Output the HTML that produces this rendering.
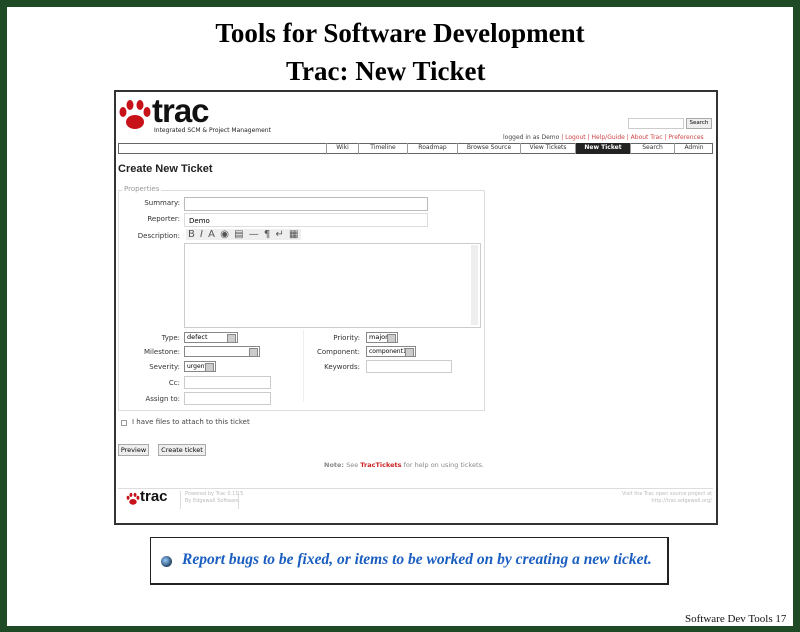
<!DOCTYPE html>
<html><head><meta charset="utf-8"><style>
*{margin:0;padding:0;box-sizing:border-box}
body{width:800px;height:632px;background:#1f4a26;position:relative;overflow:hidden;font-family:"DejaVu Sans","Liberation Sans",sans-serif}
.a{position:absolute}
.page{left:7px;top:7px;width:786px;height:619px;background:#fff}
.t{font-family:"Liberation Serif",serif;font-weight:bold;font-size:27px;color:#000;white-space:nowrap}
.s{font-size:7px;color:#444;white-space:nowrap}
.in{border:1px solid #ccc;background:#fff}
.tab{top:143px;height:11px;font-size:6px;color:#333;text-align:center;line-height:10px;border-left:1px solid #999}
.lbl{font-size:7px;color:#333;text-align:right;width:70px;white-space:nowrap}
.sel{border:1px solid #888;background:#fff;font-size:6.5px;line-height:9px;padding-left:2px;padding-right:9px;height:11px;overflow:hidden;white-space:nowrap}
.sel:after{content:"";position:absolute;right:1px;top:1px;width:7px;height:7px;background:#ccc;border:1px solid #888}
</style></head><body>
<div class="a page"></div>
<div class="a t" style="left:0;width:800px;text-align:center;top:18px">Tools for Software Development</div>
<div class="a t" style="left:286px;top:56px">Trac: New Ticket</div>

<div class="a" style="left:114px;top:90px;width:604px;height:435px;border:2px solid #333;background:#fff"></div>
<svg class="a" style="left:118px;top:98px" width="34" height="34" viewBox="0 0 34 34">
<g fill="#c8121a"><ellipse cx="17" cy="24" rx="9" ry="7"/><ellipse cx="5" cy="14" rx="3.5" ry="5"/><ellipse cx="12" cy="7" rx="3.5" ry="5"/><ellipse cx="22" cy="7" rx="3.5" ry="5"/><ellipse cx="29" cy="14" rx="3.5" ry="5"/></g></svg>
<div class="a" style="left:152px;top:92px;font:bold 33px 'Liberation Sans',sans-serif;color:#111;letter-spacing:-1px">trac</div>
<div class="a s" style="left:154px;top:127px;font-size:6px;color:#222">Integrated SCM &amp; Project Management</div>
<div class="a in" style="left:628px;top:118px;width:56px;height:11px"></div>
<div class="a" style="left:686px;top:118px;width:26px;height:11px;border:1px solid #aaa;background:#eee;font-size:5.5px;text-align:center;line-height:9px">Search</div>
<div class="a s" style="left:503px;top:134px;font-size:6px">logged in as Demo <span style="color:#c44">| Logout | Help/Guide | About Trac | Preferences</span></div>
<div class="a" style="left:118px;top:143px;width:595px;height:11px;border:1px solid #666"></div>
<div class="a tab" style="left:326px;width:32px">Wiki</div>
<div class="a tab" style="left:358px;width:49px">Timeline</div>
<div class="a tab" style="left:407px;width:50px">Roadmap</div>
<div class="a tab" style="left:457px;width:63px">Browse Source</div>
<div class="a tab" style="left:520px;width:55px">View Tickets</div>
<div class="a tab" style="left:575px;width:55px;background:#222;color:#fff;font-weight:bold">New Ticket</div>
<div class="a tab" style="left:630px;width:44px">Search</div>
<div class="a tab" style="left:674px;width:39px">Admin</div>

<div class="a" style="left:118px;top:163px;font:bold 11px 'Liberation Sans',sans-serif;color:#222">Create New Ticket</div>
<div class="a" style="left:118px;top:190px;width:367px;height:221px;border:1px solid #ddd"></div>
<div class="a s" style="left:122px;top:185px;background:#fff;padding:0 2px;color:#999">Properties</div>
<div class="a lbl" style="left:110px;top:199px">Summary:</div>
<div class="a in" style="left:184px;top:197px;width:244px;height:14px;border-color:#bbb"></div>
<div class="a lbl" style="left:110px;top:215px">Reporter:</div>
<div class="a in" style="left:184px;top:213px;width:244px;height:14px;border-color:#ddd;font-size:7px;padding:3px 4px">Demo</div>
<div class="a lbl" style="left:110px;top:232px">Description:</div>
<div class="a s" style="left:186px;top:229px;font-size:10px;color:#555;background:#eee;padding:0 2px;letter-spacing:1px">B <i>I</i> A ◉ ▤ — ¶ ↵ ▦</div>
<div class="a in" style="left:184px;top:243px;width:297px;height:85px"></div>
<div class="a" style="left:471px;top:245px;width:7px;height:80px;background:#eee"></div>
<div class="a" style="left:303px;top:330px;width:1px;height:72px;background:#eee"></div>

<div class="a lbl" style="left:110px;top:334px">Type:</div>
<div class="a sel" style="left:184px;top:332px;width:54px">defect</div>
<div class="a lbl" style="left:290px;top:334px">Priority:</div>
<div class="a sel" style="left:366px;top:332px;width:32px">major</div>
<div class="a lbl" style="left:110px;top:348px">Milestone:</div>
<div class="a sel" style="left:184px;top:346px;width:76px"></div>
<div class="a lbl" style="left:290px;top:348px">Component:</div>
<div class="a sel" style="left:366px;top:346px;width:50px;font-size:6px">component1</div>
<div class="a lbl" style="left:110px;top:363px">Severity:</div>
<div class="a sel" style="left:184px;top:361px;width:32px;font-size:6px">urgent</div>
<div class="a lbl" style="left:290px;top:363px">Keywords:</div>
<div class="a in" style="left:366px;top:360px;width:86px;height:13px"></div>
<div class="a lbl" style="left:110px;top:379px">Cc:</div>
<div class="a in" style="left:184px;top:376px;width:87px;height:13px"></div>
<div class="a lbl" style="left:110px;top:395px">Assign to:</div>
<div class="a in" style="left:184px;top:392px;width:87px;height:13px"></div>

<div class="a" style="left:121px;top:420px;width:6px;height:6px;border:1px solid #999"></div>
<div class="a s" style="left:132px;top:418px;font-size:7px">I have files to attach to this ticket</div>
<div class="a" style="left:118px;top:444px;width:31px;height:12px;border:1px solid #aaa;background:#eee;font-size:6.5px;text-align:center;line-height:10px">Preview</div>
<div class="a" style="left:158px;top:444px;width:48px;height:12px;border:1px solid #aaa;background:#eee;font-size:6.5px;text-align:center;line-height:10px">Create ticket</div>
<div class="a s" style="left:324px;top:461px;font-size:6.5px;color:#888"><b>Note:</b> See <b style="color:#c22">TracTickets</b> for help on using tickets.</div>
<div class="a" style="left:118px;top:488px;width:595px;height:1px;background:#ddd"></div>
<svg class="a" style="left:126px;top:492px" width="14" height="14" viewBox="0 0 34 34"><g fill="#c8121a"><ellipse cx="17" cy="24" rx="9" ry="7"/><ellipse cx="5" cy="14" rx="3.5" ry="5"/><ellipse cx="12" cy="7" rx="3.5" ry="5"/><ellipse cx="22" cy="7" rx="3.5" ry="5"/><ellipse cx="29" cy="14" rx="3.5" ry="5"/></g></svg>
<div class="a" style="left:140px;top:488px;font:bold 15px 'Liberation Sans',sans-serif;color:#111">trac</div>
<div class="a" style="left:180px;top:491px;width:1px;height:18px;background:#ddd"></div>
<div class="a s" style="left:185px;top:491px;font-size:5px;color:#bbb;line-height:7px">Powered by Trac 0.11.5<br>By Edgewall Software.</div>
<div class="a" style="left:238px;top:491px;width:1px;height:18px;background:#ddd"></div>
<div class="a s" style="left:600px;top:491px;width:112px;text-align:right;font-size:5px;color:#bbb;line-height:7px">Visit the Trac open source project at<br>http://trac.edgewall.org/</div>

<div class="a" style="left:150px;top:537px;width:519px;height:48px;border:1px solid #222;border-right-width:2px;border-bottom-width:2px;background:#fff"></div>
<div class="a" style="left:161px;top:556px;width:11px;height:11px;border-radius:50%;background:radial-gradient(circle at 40% 40%,#9cf,#246 70%,#222)"></div>
<div class="a" style="left:182px;top:551px;font:italic bold 15.5px 'Liberation Serif',serif;color:#1a5ec0;white-space:nowrap">Report bugs to be fixed, or items to be worked on by creating a new ticket.</div>
<div class="a" style="left:685px;top:613px;font:11px 'Liberation Serif',serif;color:#111;white-space:nowrap">Software Dev Tools 17</div>
</body></html>
